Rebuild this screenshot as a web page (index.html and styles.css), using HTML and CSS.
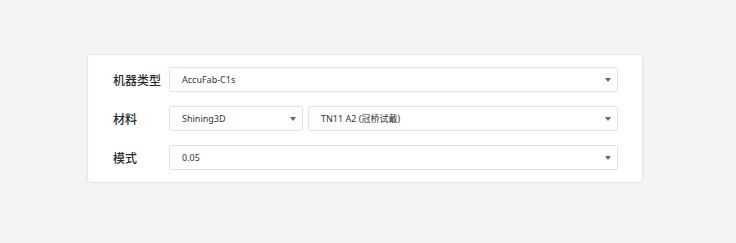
FILE: index.html
```html
<!DOCTYPE html>
<html lang="zh-CN">
<head>
<meta charset="utf-8">
<link rel="stylesheet" href="styles.css">
</head>
<body>
<div class="card">
  <div class="row">
    <div class="label">机器类型</div>
    <div class="controls">
      <div class="select full"><span>AccuFab-C1s</span><i class="arrow"></i></div>
    </div>
  </div>
  <div class="row">
    <div class="label">材料</div>
    <div class="controls">
      <div class="select brand"><span>Shining3D</span><i class="arrow"></i></div>
      <div class="select full"><span>TN11 A2 (冠桥试戴)</span><i class="arrow"></i></div>
    </div>
  </div>
  <div class="row">
    <div class="label">模式</div>
    <div class="controls">
      <div class="select full"><span>0.05</span><i class="arrow"></i></div>
    </div>
  </div>
</div>
</body>
</html>
```
FILE: styles.css
```css
html, body {
  margin: 0;
  padding: 0;
  background: #f3f4f6;
}
body {
  padding: 54px 0 0 87px;
  font-family: "Noto Sans", "Noto Sans CJK SC", sans-serif;
}
.card {
  box-sizing: border-box;
  width: 556px;
  height: 129px;
  background: #fff;
  border: 1px solid #e6e7ea;
  border-radius: 4px;
  box-shadow: 0 1px 3px rgba(0, 0, 0, 0.06);
  padding: 12px 24px 12px 24px;
  display: flex;
  flex-direction: column;
  gap: 14px;
}
.row {
  display: flex;
  align-items: center;
  height: 25px;
}
.label {
  width: 57px;
  flex: none;
  font-family: "Noto Sans CJK SC", sans-serif;
  font-size: 12px;
  font-weight: 500;
  color: #2b2b2b;
  padding-left: 1px;
  box-sizing: border-box;
}
.controls {
  flex: 1;
  display: flex;
  gap: 5px;
  height: 25px;
}
.select {
  box-sizing: border-box;
  height: 25px;
  border: 1px solid #e2e3e6;
  border-radius: 2px;
  display: flex;
  align-items: center;
  padding: 0 6px 0 12px;
  font-size: 9px;
  color: #333;
}
.select span {
  flex: 1;
  white-space: nowrap;
}
.full {
  flex: 1;
}
.brand {
  width: 134px;
  flex: none;
}
.arrow {
  width: 0;
  height: 0;
  border-left: 3.5px solid transparent;
  border-right: 3.5px solid transparent;
  border-top: 4px solid #666;
}
```
